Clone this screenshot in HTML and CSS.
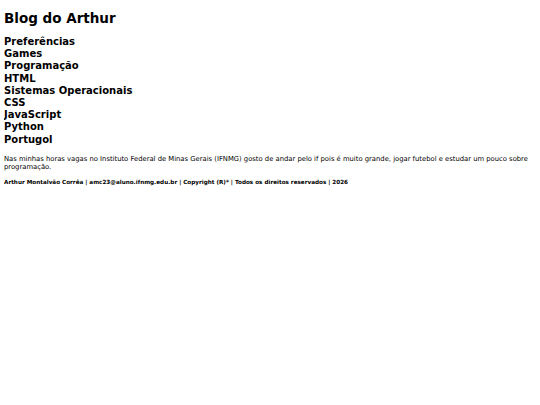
FILE: index.html
```html
<!DOCTYPE html>
<html lang="pt-BR">
<head>
<meta charset="utf-8">
<title>Blog do Arthur</title>
<link rel="stylesheet" href="styles.css">
</head>
<body>
<header class="top">
  <h1 class="title">Blog do Arthur</h1>
</header>
<nav class="menu">
  <div class="item">Preferências</div>
  <div class="item">Games</div>
  <div class="item">Programação</div>
  <div class="item">HTML</div>
  <div class="item">Sistemas Operacionais</div>
  <div class="item">CSS</div>
  <div class="item">JavaScript</div>
  <div class="item">Python</div>
  <div class="item">Portugol</div>
</nav>
<p class="about">Nas minhas horas vagas no Instituto Federal de Minas Gerais (IFNMG) gosto de andar pelo if pois é muito grande, jogar futebol e estudar um pouco sobre programação.</p>
<footer class="foot">Arthur Montalvão Corrêa | amc23@aluno.ifnmg.edu.br | Copyright (R)* | Todos os direitos reservados | 2026</footer>
</body>
</html>
```
FILE: styles.css
```css
body {
  margin: 4px;
  font-family: "DejaVu Sans", Verdana, sans-serif;
  color: #000;
  background: #fff;
}
.title {
  font-size: 13.5px;
  font-weight: bold;
  margin: 6px 0 10px;
  line-height: 16px;
}
.menu {
  display: flex;
  flex-direction: column;
}
.item {
  font-size: 10px;
  font-weight: bold;
  line-height: 12.2px;
}
.about {
  font-size: 6.8px;
  line-height: 8px;
  margin: 9px 0 8px;
}
.foot {
  font-size: 5.66px;
  font-weight: bold;
  line-height: 7px;
}
```
